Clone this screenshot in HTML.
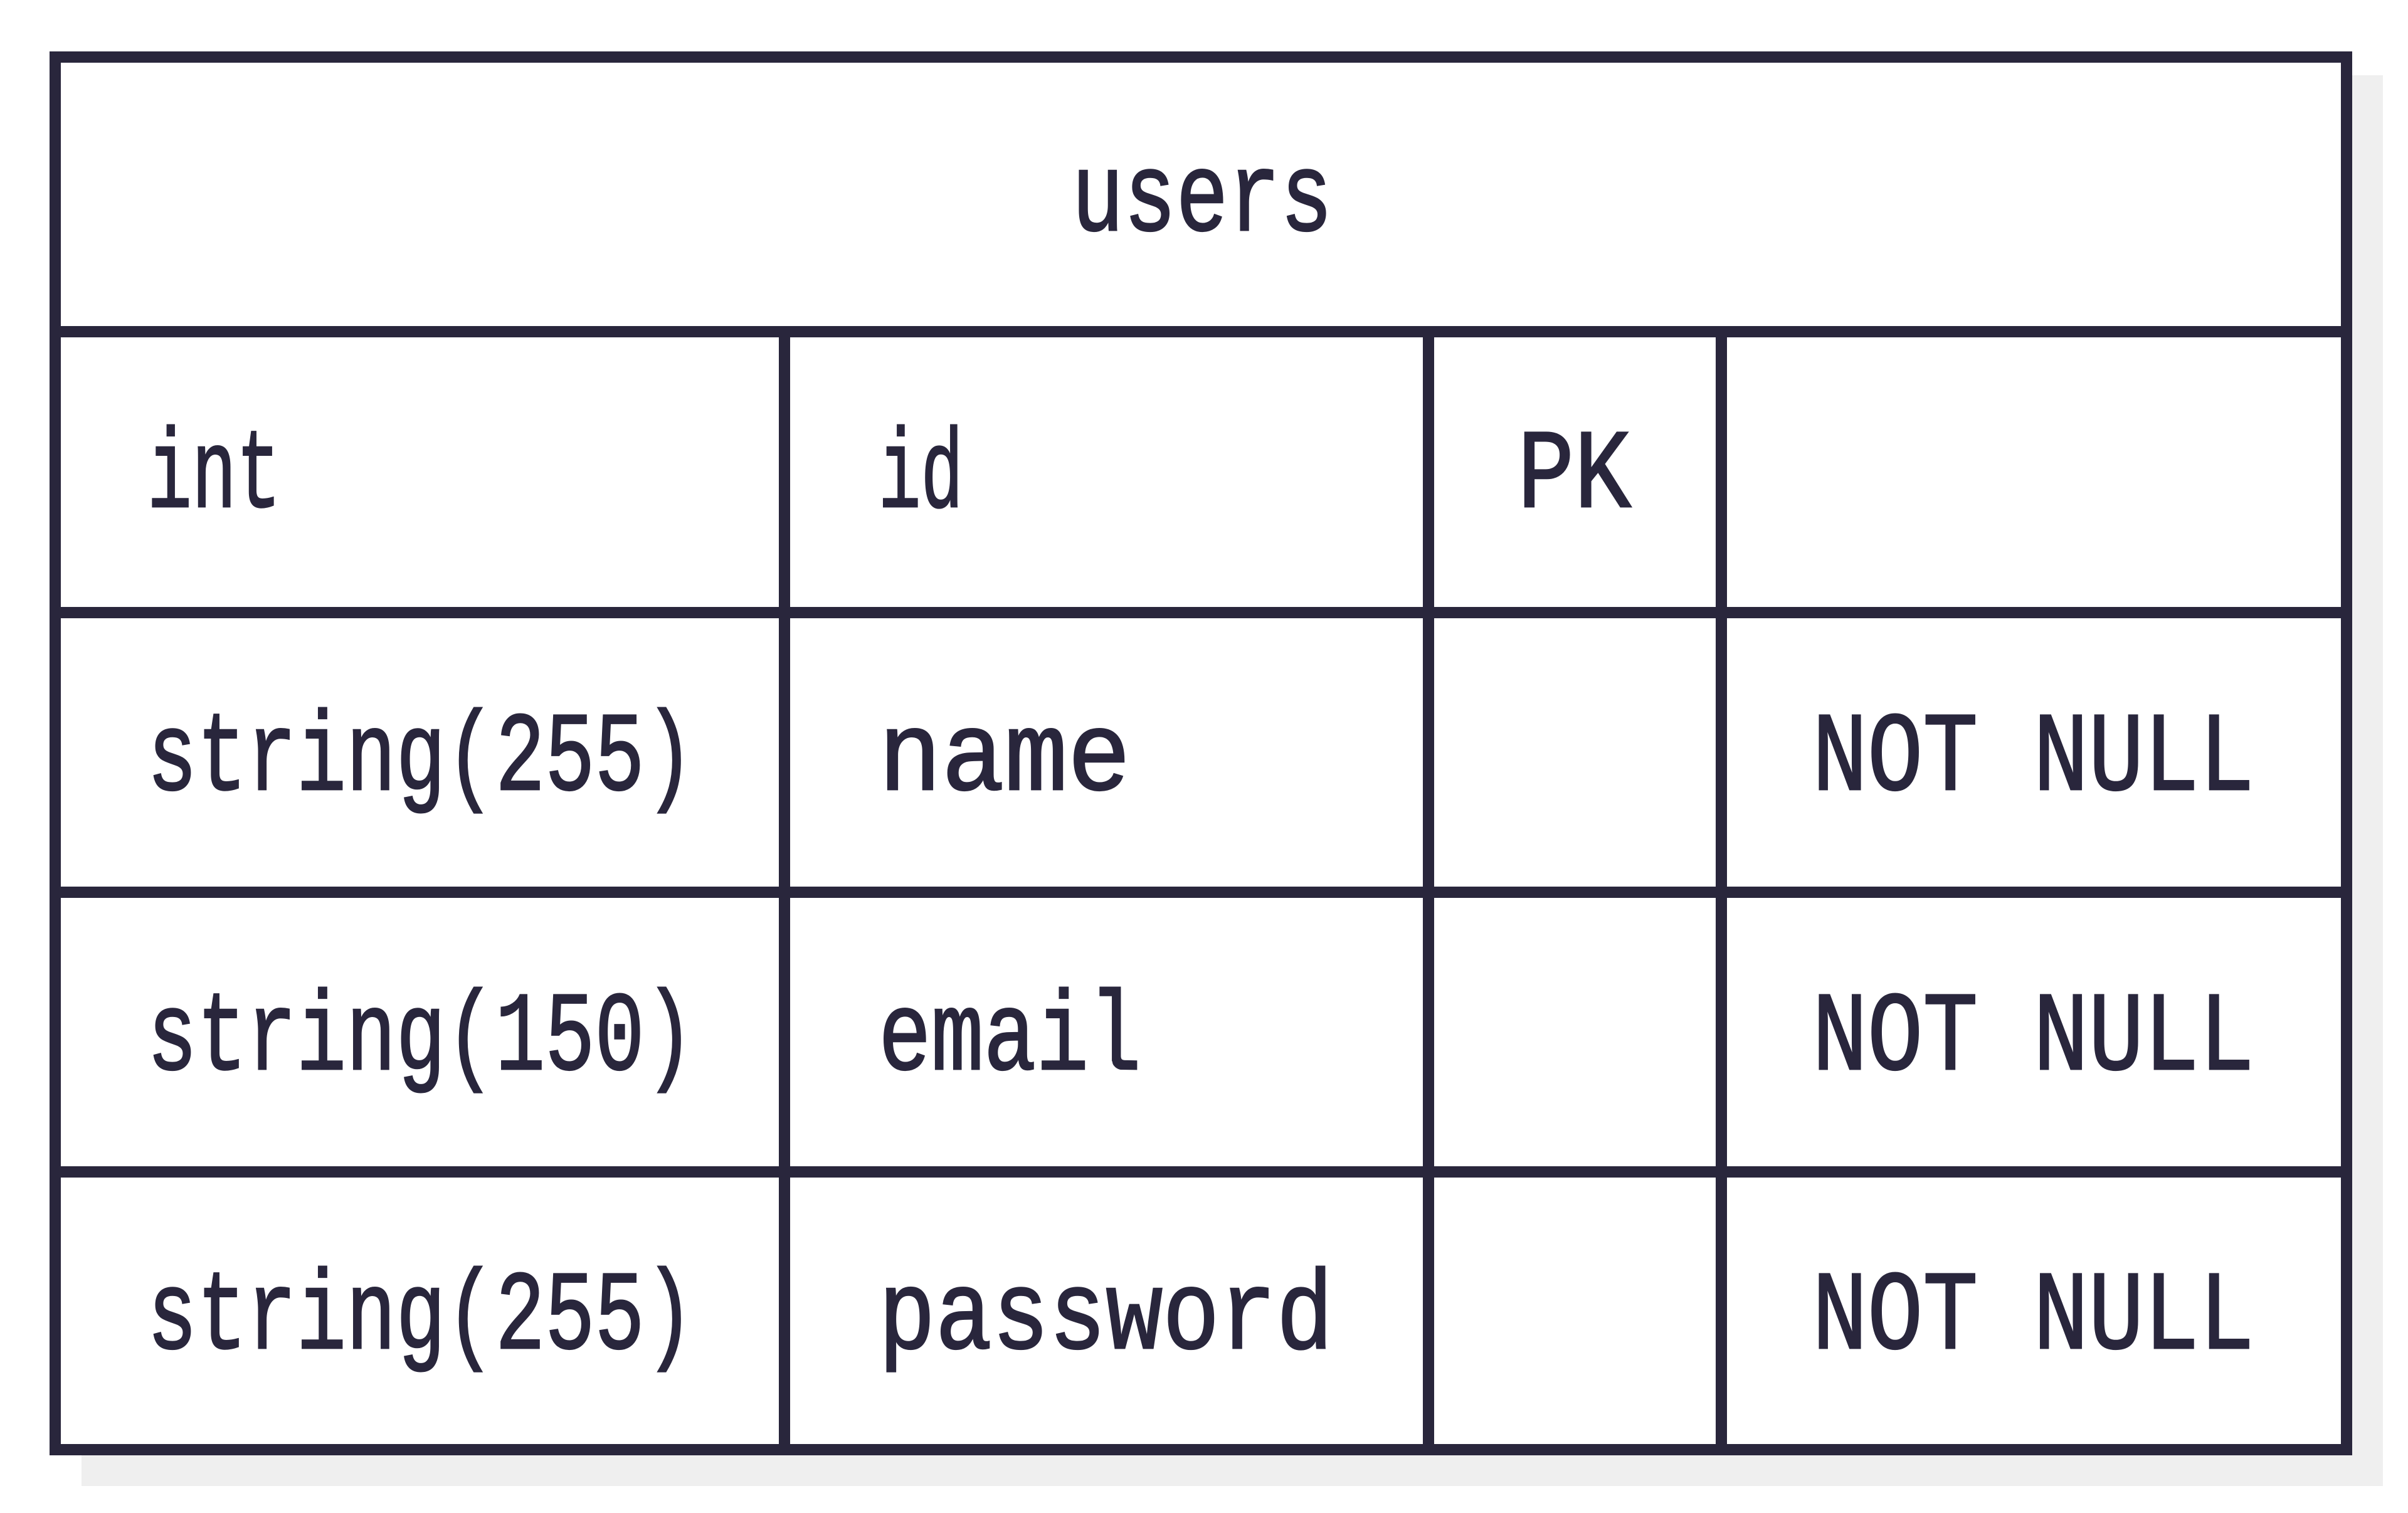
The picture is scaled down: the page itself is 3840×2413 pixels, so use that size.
<!DOCTYPE html>
<html><head><meta charset="utf-8"><style>
html,body{margin:0;padding:0;background:#fff;width:3840px;height:2413px;overflow:hidden}
</style></head><body>
<svg width="3840" height="2413" xmlns="http://www.w3.org/2000/svg">
<rect x="130" y="120" width="3670" height="2250" fill="#efefef"/>
<rect x="88" y="91" width="3654" height="2221" fill="#fff"/>
<g stroke="#29263c" stroke-width="18" fill="none">
<rect x="88" y="91" width="3654" height="2221"/>
<line x1="88" y1="529" x2="3742" y2="529"/>
<line x1="88" y1="977" x2="3742" y2="977"/>
<line x1="88" y1="1423" x2="3742" y2="1423"/>
<line x1="88" y1="1869" x2="3742" y2="1869"/>
<line x1="1251" y1="529" x2="1251" y2="2312"/>
<line x1="2278" y1="529" x2="2278" y2="2312"/>
<line x1="2745" y1="529" x2="2745" y2="2312"/>
</g>
<g fill="#29263c" stroke="#29263c" stroke-width="2" font-family="Liberation Mono, monospace" font-size="132">
<text transform="translate(1709,367) scale(1,1.36)" textLength="416" lengthAdjust="spacingAndGlyphs">users</text>
<text transform="translate(235,808) scale(1,1.36)" textLength="213" lengthAdjust="spacingAndGlyphs">int</text>
<text transform="translate(1401,808) scale(1,1.36)" textLength="135" lengthAdjust="spacingAndGlyphs">id</text>
<text transform="translate(2420,808) scale(1,1.36)" textLength="181" lengthAdjust="spacingAndGlyphs">PK</text>
<text transform="translate(235,1259) scale(1,1.36)" textLength="872" lengthAdjust="spacingAndGlyphs">string(255)</text>
<text transform="translate(1401,1259) scale(1,1.36)" textLength="402" lengthAdjust="spacingAndGlyphs">name</text>
<text transform="translate(2890,1259) scale(1,1.36)" textLength="705" lengthAdjust="spacingAndGlyphs">NOT NULL</text>
<text transform="translate(235,1705) scale(1,1.36)" textLength="872" lengthAdjust="spacingAndGlyphs">string(150)</text>
<text transform="translate(1401,1705) scale(1,1.36)" textLength="419" lengthAdjust="spacingAndGlyphs">email</text>
<text transform="translate(2890,1705) scale(1,1.36)" textLength="705" lengthAdjust="spacingAndGlyphs">NOT NULL</text>
<text transform="translate(235,2150) scale(1,1.36)" textLength="872" lengthAdjust="spacingAndGlyphs">string(255)</text>
<text transform="translate(1401,2150) scale(1,1.36)" textLength="725" lengthAdjust="spacingAndGlyphs">password</text>
<text transform="translate(2890,2150) scale(1,1.36)" textLength="705" lengthAdjust="spacingAndGlyphs">NOT NULL</text>
</g>
</svg>
</body></html>
